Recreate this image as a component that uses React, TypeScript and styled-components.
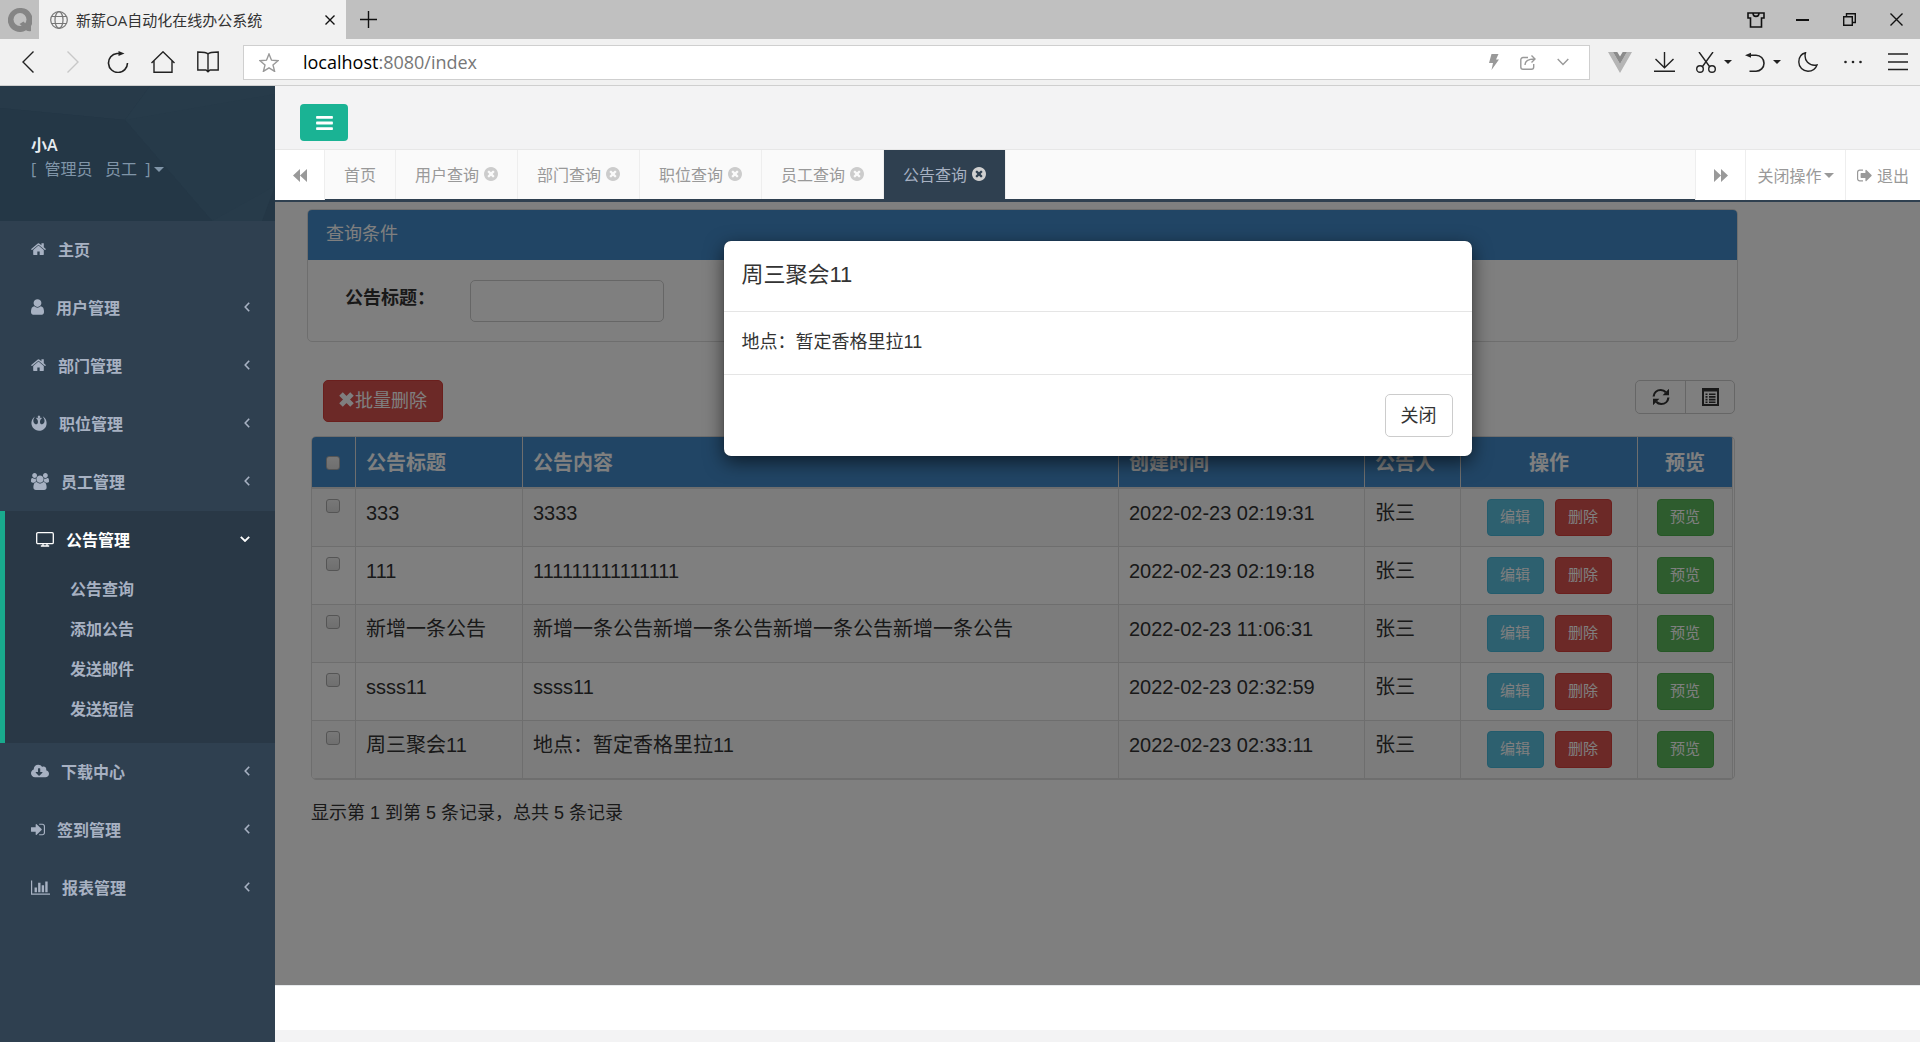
import React from "react";
import styled, { createGlobalStyle, css } from "styled-components";
import { FaRebel, FaCloudDownloadAlt } from "react-icons/fa";

const uiFont = `"Open Sans", "Noto Sans CJK SC", sans-serif`;
const pageFont = `"Liberation Sans", "Noto Sans CJK SC", sans-serif`;

const GlobalStyle = createGlobalStyle`
  *, *::before, *::after { box-sizing: border-box; }
  body { margin: 0; font-family: ${uiFont}; font-size: 16px; background: #f3f3f4; }
  button, input { font-family: inherit; }
  button { margin: 0; padding: 0; border: 0; background: none; color: inherit; cursor: pointer; }
  a { color: inherit; text-decoration: none; }
  svg { display: block; flex: none; }
  ul { list-style: none; margin: 0; padding: 0; }
`;

const Shell = styled.div`
  display: flex;
  flex-direction: column;
  min-height: 100vh;
`;

/* ---------- browser window ---------- */

const TitleBar = styled.header`
  display: flex;
  height: 39px;
  background: #c0c0c0;
  color: #111;
`;
const Center = css`
  display: flex;
  align-items: center;
  justify-content: center;
`;
const BrandMark = styled.div`
  ${Center}
  width: 39px;
`;
const BrowserTab = styled.div`
  display: flex;
  align-items: center;
  gap: 8px;
  width: 307px;
  padding: 0 11px;
  background: #f1f1f1;
  color: #333;
  font-size: 15px;
`;
const TabTitle = styled.span`
  flex: 1;
  white-space: nowrap;
`;
const NewTab = styled.button`
  ${Center}
  width: 44px;
`;
const WindowControls = styled.div`
  display: flex;
  margin-left: auto;
`;
const WindowButton = styled.button`
  ${Center}
  width: 47px;
`;
const ToolBar = styled.div`
  display: flex;
  align-items: center;
  height: 47px;
  padding-left: 5px;
  border-bottom: 1px solid #cfcfcf;
  background: #f1f1f1;
  color: #222;
`;
const ToolButton = styled.button<{ $faded?: boolean }>`
  ${Center}
  gap: 8px;
  min-width: 45px;
  height: 45px;
  color: ${(p) => (p.$faded ? "#c8c8c8" : "inherit")};
`;
const ToolMenu = styled(ToolButton)`
  width: 49px;
  padding-left: 4px;
`;
const AddressBar = styled.div`
  display: flex;
  align-items: center;
  flex: 1;
  height: 35px;
  margin: 0 7px 0 13px;
  padding: 0 20px 0 15px;
  border: 1px solid #cfcfcf;
  background: #fff;
  color: #999;
`;
const Url = styled.div`
  flex: 1;
  padding-left: 24px;
  color: #777;
  font-size: 18px;
  b { color: #000; font-weight: 400; }
`;
const AddressIcons = styled.div`
  display: flex;
  align-items: center;
  gap: 21px;
`;

/* ---------- sidebar ---------- */

const AppBody = styled.div`
  display: flex;
  flex: 1;
`;
const Sidebar = styled.nav`
  width: 275px;
  flex: none;
  background: #2f4050;
  color: #a7b1c2;
`;
const Profile = styled.div`
  position: relative;
  height: 135px;
  padding: 47px 31px 0;
  overflow: hidden;
  background: #243746;
  line-height: 24px;
`;
const ProfilePattern = styled.svg`
  position: absolute;
  inset: 0;
  width: 100%;
  height: 100%;
`;
const UserName = styled.div`
  position: relative;
  color: #e7ebf0;
  font-weight: 600;
`;
const Role = styled.button`
  position: relative;
  display: flex;
  align-items: center;
  gap: 3px;
  color: #8095a8;
  font-size: 16px;
  line-height: 24px;
  white-space: pre;
`;
const Caret = styled.i`
  border: 5px solid transparent;
  border-top-color: currentColor;
  border-bottom: 0;
`;
const SmallCaret = styled(Caret)`
  border-width: 4px;
  border-bottom: 0;
`;
const MenuItem = styled.li<{ $active?: boolean }>`
  ${(p) =>
    p.$active &&
    css`
      border-left: 5px solid #19aa8d;
      background: #293846;
    `}
`;
const MenuLink = styled.a<{ $active?: boolean }>`
  display: flex;
  align-items: center;
  gap: 12px;
  height: 58px;
  padding: 0 25px 2px 31px;
  font-weight: 600;
  color: ${(p) => (p.$active ? "#fff" : "#a7b1c2")};
`;
const MenuText = styled.span`
  flex: 1;
`;
const SubMenu = styled.ul`
  padding-bottom: 14px;
`;
const SubLink = styled.a`
  display: block;
  padding-left: 65px;
  line-height: 40px;
  font-weight: 600;
`;

/* ---------- main column ---------- */

const Main = styled.main`
  display: flex;
  flex: 1;
  flex-direction: column;
  min-width: 0;
  background: #f3f3f4;
`;
const TopRow = styled.div`
  padding: 18px 25px 8px;
`;
const Toggle = styled.button`
  ${Center}
  width: 48px;
  height: 37px;
  border-radius: 4px;
  background: #1ab394;
  color: #fff;
`;
const TabBar = styled.div`
  display: flex;
  height: 53px;
  border-top: 1px solid #e7e7e7;
  border-bottom: 2px solid #2f4050;
  background: #fff;
  color: #999;
`;
const RollButton = styled.button<{ $width: number; $side: "left" | "right" }>`
  ${Center}
  gap: 2px;
  width: ${(p) => p.$width}px;
  border-${(p) => (p.$side === "left" ? "right" : "left")}: 1px solid #eee;
  font-size: 16px;
`;
const ExitButton = styled(RollButton)`
  gap: 5px;
`;
const Tabs = styled.div`
  display: flex;
  flex: 1;
  border-bottom: 1px solid #2f4050;
  background: #fafafa;
`;
const Tab = styled.a<{ $active?: boolean }>`
  display: flex;
  align-items: center;
  gap: 5px;
  padding: 0 19px 1px;
  border-right: 1px solid #eee;
  background: ${(p) => (p.$active ? "#2f4050" : "transparent")};
  color: ${(p) => (p.$active ? "#a7b1c2" : "#999")};
  white-space: nowrap;
`;
const TabClose = styled.span<{ $active?: boolean }>`
  color: ${(p) => (p.$active ? "#d0d0d0" : "#ccc")};
`;
const Footer = styled.footer`
  height: 45px;
  margin-bottom: 12px;
  border-top: 1px solid #e7eaec;
  background: #fff;
`;

/* ---------- notice page ---------- */

const Frame = styled.section`
  position: relative;
  flex: 1;
  padding: 7px 32px;
  background: #fff;
  color: #333;
  font-family: ${pageFont};
  font-size: 18px;
  line-height: 26px;
`;
const Container = styled.div`
  max-width: 1431px;
`;
const Panel = styled.form`
  border: 1px solid #ddd;
  border-radius: 5px;
`;
const PanelHeading = styled.div`
  padding: 11px 18px 13px;
  border-radius: 4px 4px 0 0;
  background: #428bca;
  color: #fff;
`;
const PanelBody = styled.div`
  display: flex;
  align-items: flex-start;
  padding: 20px 37px 19px;
`;
const FieldLabel = styled.label`
  width: 125px;
  padding-top: 5px;
  font-weight: 700;
`;
const TextField = styled.input`
  width: 194px;
  height: 42px;
  padding: 8px 15px;
  border: 1px solid #ccc;
  border-radius: 5px;
  background: #fff;
  font-size: 18px;
`;
const Actions = styled.div`
  display: flex;
  align-items: flex-start;
  justify-content: space-between;
  padding: 38px 3px 14px 16px;
`;
const BatchDelete = styled.button`
  ${Center}
  gap: 1px;
  height: 42px;
  padding: 0 15px 4px;
  border: 1px solid #d43f3a;
  border-radius: 5px;
  background: #d9534f;
  color: #fff;
  font-size: 18px;
`;
const ButtonGroup = styled.div`
  display: flex;
  overflow: hidden;
  border: 1px solid #ccc;
  border-radius: 5px;
`;
const GroupButton = styled.button`
  ${Center}
  width: 49px;
  height: 32px;
  color: #333;
  & + & { border-left: 1px solid #ccc; }
`;
const TableBox = styled.div`
  margin: 0 3px 0 4px;
  padding-right: 1px;
  overflow: hidden;
  border: 1px solid #ddd;
  border-radius: 5px;
`;
const Table = styled.table`
  width: 100%;
  table-layout: fixed;
  border-collapse: separate;
  border-spacing: 0;
  font-size: 20px;
  line-height: 28px;
`;
const Col = styled.col<{ $width?: number }>`
  width: ${(p) => (p.$width ? `${p.$width}px` : "auto")};
`;
const HeadCell = styled.th<{ $align?: string }>`
  height: 52px;
  padding: 2px 10px 0;
  border-right: 1px solid #ddd;
  border-bottom: 2px solid #ddd;
  background: #428bca;
  color: #fff;
  text-align: ${(p) => p.$align || "left"};
  vertical-align: middle;
`;
const BodyRow = styled.tr`
  &:nth-child(odd) { background: #f9f9f9; }
`;
const Cell = styled.td`
  height: 58px;
  padding: 10px;
  border-right: 1px solid #ddd;
  border-bottom: 1px solid #ddd;
  vertical-align: top;
`;
const Tick = styled.input`
  display: block;
  appearance: none;
  width: 14px;
  height: 14px;
  margin: 0 4px;
  border: 1px solid #aaa;
  border-radius: 3px;
  background: linear-gradient(#f0f0f0, #dedede);
`;
const CellActions = styled.div`
  display: flex;
  justify-content: center;
  gap: 11px;
`;
const tones = {
  info: ["#5bc0de", "#46b8da"],
  danger: ["#d9534f", "#d43f3a"],
  success: ["#5cb85c", "#4cae4c"],
};
const SmallButton = styled.button<{ $tone: keyof typeof tones }>`
  width: 57px;
  height: 37px;
  padding-bottom: 4px;
  border: 1px solid ${(p) => tones[p.$tone][1]};
  border-radius: 4px;
  background: ${(p) => tones[p.$tone][0]};
  color: #fff;
  font-size: 15px;
`;
const Summary = styled.p`
  margin: 0;
  padding: 20px 4px;
`;

/* ---------- modal ---------- */

const Backdrop = styled.div`
  position: absolute;
  inset: 0;
  display: flex;
  align-items: flex-start;
  justify-content: center;
  padding-top: 39px;
  background: rgba(0, 0, 0, 0.5);
`;
const Dialog = styled.div`
  width: 748px;
  max-width: 100%;
  border-radius: 7px;
  background: #fff;
  box-shadow: 0 6px 19px rgba(0, 0, 0, 0.6), 0 0 1px rgba(0, 0, 0, 0.6);
`;
const DialogTitle = styled.h4`
  margin: 0;
  padding: 18px 18px 20px;
  border-bottom: 1px solid #e5e5e5;
  font-size: 22px;
  font-weight: 400;
  line-height: 32px;
`;
const DialogBody = styled.div`
  padding: 17px 18px 19px;
`;
const DialogFooter = styled.div`
  display: flex;
  justify-content: flex-end;
  padding: 19px;
  border-top: 1px solid #e5e5e5;
`;
const CloseButton = styled.button`
  width: 68px;
  height: 43px;
  padding-bottom: 4px;
  border: 1px solid #ccc;
  border-radius: 5px;
  background: #fff;
  color: #333;
  font-size: 18px;
`;

/* ---------- icons ---------- */

type StrokeProps = { w: number; h: number; sw?: number; children: React.ReactNode };
const Line = ({ w, h, sw = 1.4, children }: StrokeProps) => (
  <svg width={w} height={h} viewBox={`0 0 ${w} ${h}`} fill="none" stroke="currentColor" strokeWidth={sw}>
    {children}
  </svg>
);
const Solid = ({ w, h, box, d }: { w: number; h: number; box: string; d: string }) => (
  <svg width={w} height={h} viewBox={box} fill="currentColor">
    <path d={d} />
  </svg>
);

const HomeIcon = () => (
  <Solid w={15} h={14} box="80 220 1632 1340" d="M1472 992v480q0 26-19 45t-45 19h-384v-384h-256v384h-384q-26 0-45-19t-19-45v-480q0-1 .5-3t.5-3l575-474 575 474q1 2 1 6zm223-69l-62 74q-8 9-21 11h-3q-13 0-21-7l-692-577-692 577q-12 8-24 7-13-2-21-11l-62-74q-8-10-7-23.5t11-21.5l719-599q32-26 76-26t76 26l244 204v-195q0-14 9-23t23-9h192q14 0 23 9t9 23v408l219 182q10 8 11 21.5t-7 23.5z" />
);
const UserIcon = () => (
  <Solid w={13} h={16} box="256 128 1280 1536" d="M1536 1399q0 109-62.5 187t-150.5 78h-854q-88 0-150.5-78t-62.5-187q0-85 8.5-160.5t31.5-152 58.5-131 94-89 134.5-34.5q131 128 313 128t313-128q76 0 134.5 34.5t94 89 58.5 131 31.5 152 8.5 160.5zm-256-887q0 159-112.5 271.5t-271.5 112.5-271.5-112.5-112.5-271.5 112.5-271.5 271.5-112.5 271.5 112.5 112.5 271.5z" />
);
const UsersIcon = () => (
  <Solid w={18} h={17} box="0 0 1920 1792" d="M593 896q-162 5-265 128h-134q-82 0-138-40.5t-56-118.5q0-353 124-353 6 0 43.5 21t97.5 42.5 119 21.5q67 0 133-23-5 37-5 66 0 139 81 256zm1071 637q0 120-73 189.5t-194 69.500h-874q-121 0-194-69.500t-73-189.500q0-53 3.500-103.500t14-109 26.500-108.500 43-97.500 62-81 85.500-53.500 111.500-20q10 0 43 21.500t73 48 107 48 135 21.500 135-21.500 107-48 73-48 43-21.500q61 0 111.500 20t85.500 53.500 62 81 43 97.500 26.500 108.500 14 109 3.500 103.500zm-1024-1277q0 106-75 181t-181 75-181-75-75-181 75-181 181-75 181 75 75 181zm704 384q0 159-112.500 271.500t-271.500 112.500-271.500-112.500-112.500-271.500 112.500-271.500 271.500-112.500 271.500 112.500 112.500 271.500zm576 225q0 78-56 118.500t-138 40.500h-134q-103-123-265-128 81-117 81-256 0-29-5-66 66 23 133 23 59 0 119-21.500t97.500-42.500 43.500-21q124 0 124 353zm-128-609q0 106-75 181t-181 75-181-75-75-181 75-181 181-75 181 75 75 181z" />
);
const SignInIcon = () => (
  <Solid w={14} h={13} box="128 256 1536 1280" d="M1312 896q0 26-19 45l-544 544q-19 19-45 19t-45-19-19-45v-288h-448q-26 0-45-19t-19-45v-384q0-26 19-45t45-19h448v-288q0-26 19-45t45-19 45 19l544 544q19 19 19 45zm352-352v704q0 119-84.5 203.5t-203.5 84.5h-320q-13 0-22.5-9.5t-9.5-22.5q0-4-1-20t-.5-26.5 3-23.5 10-19.5 20.5-6.5h320q66 0 113-47t47-113v-704q0-66-47-113t-113-47h-312l-11.5-1-11.5-3-8-5.5-7-9-2-13.5q0-4-1-20t-.5-26.5 3-23.5 10-19.5 20.5-6.5h320q119 0 203.5 84.5t84.5 203.5z" />
);
const SignOutIcon = () => (
  <Solid w={15} h={13} box="64 256 1600 1280" d="M704 1440q0 4 1 20t.5 26.5-3 23.5-10 19.5-20.5 6.5h-320q-119 0-203.5-84.5t-84.5-203.5v-704q0-119 84.5-203.5t203.5-84.5h320q13 0 22.5 9.5t9.5 22.5q0 4 1 20t.5 26.5-3 23.5-10 19.5-20.5 6.5h-320q-66 0-113 47t-47 113v704q0 66 47 113t113 47h312l11.5 1 11.5 3 8 5.5 7 9 2 13.5zm928-544q0 26-19 45l-544 544q-19 19-45 19t-45-19-19-45v-288h-448q-26 0-45-19t-19-45v-384q0-26 19-45t45-19h448v-288q0-26 19-45t45-19 45 19l544 544q19 19 19 45z" />
);
const ChartIcon = () => (
  <Solid w={19} h={15} box="0 128 2048 1536" d="M640 896v512h-256v-512h256zm384-512v1024h-256v-1024h256zm1024 1152v128h-2048v-1536h128v1408h1920zm-640-896v768h-256v-768h256zm384-384v1152h-256v-1152h256z" />
);
const BarsIcon = () => (
  <Solid w={17} h={14} box="128 256 1536 1280" d="M1664 1344v128q0 26-19 45t-45 19h-1408q-26 0-45-19t-19-45v-128q0-26 19-45t45-19h1408q26 0 45 19t19 45zm0-512v128q0 26-19 45t-45 19h-1408q-26 0-45-19t-19-45v-128q0-26 19-45t45-19h1408q26 0 45 19t19 45zm0-512v128q0 26-19 45t-45 19h-1408q-26 0-45-19t-19-45v-128q0-26 19-45t45-19h1408q26 0 45 19t19 45z" />
);
const TimesCircle = () => (
  <Solid w={14} h={14} box="128 128 1536 1536" d="M1277 1122q0-26-19-45l-181-181 181-181q19-19 19-45 0-27-19-46l-90-90q-19-19-46-19-26 0-45 19l-181 181-181-181q-19-19-45-19-27 0-46 19l-90 90q-19 19-19 46 0 26 19 45l181 181-181 181q-19 19-19 45 0 27 19 46l90 90q19 19 46 19 26 0 45-19l181-181 181 181q19 19 45 19 27 0 46-19l90-90q19-19 19-46zm387-226q0 209-103 385.5t-279.5 279.5-385.5 103-385.5-103-279.5-279.5-103-385.5 103-385.5 279.5-279.5 385.5-103 385.5 103 279.5 279.5 103 385.5z" />
);
const DesktopIcon = () => (
  <Line w={18} h={15} sw={1.3}>
    <rect x="0.7" y="0.7" width="16.6" height="11" rx="1.2" />
    <path d="M7 12v1.6M11 12v1.6M4.8 14h8.4" />
  </Line>
);
const AngleLeft = () => (
  <Line w={6} h={10} sw={1.6}><path d="M5.2 0.8 1.2 5l4 4.2" /></Line>
);
const AngleDown = () => (
  <Line w={10} h={6} sw={1.8}><path d="M.8 .8 5 5l4.200-4.200" /></Line>
);
const Backward = () => <Solid w={14} h={13} box="0 0 14 13" d="M7 0v13L0 6.500zM14 0v13L7 6.500z" />;
const Forward = () => <Solid w={14} h={13} box="0 0 14 13" d="M0 0v13L7 6.500zM7 0v13l7-6.500z" />;
const RemoveIcon = () => (
  <Line w={15} h={15} sw={5}><path d="M2 2l11 11M13 2 2 13" /></Line>
);
const RefreshIcon = () => (
  <svg width="18" height="18" viewBox="0 0 18 18" fill="none" stroke="currentColor" strokeWidth="2.2">
    <path d="M1.600 8.500C2 4.500 5 2 8.800 2c2 0 3.800.8 5 2.200M16.400 9.500C16 13.500 13 16 9.200 16c-2 0-3.800-.8-5-2.200" />
    <path d="M17 .8v6.400h-6.400zM1 17.200v-6.400h6.400z" fill="currentColor" stroke="none" />
  </svg>
);
const ListIcon = () => (
  <svg width="17" height="18" viewBox="0 0 17 18" fill="none" stroke="currentColor">
    <path d="M1 1h15v16H1z" strokeWidth="2" />
    <path d="M.5 1.800h16" strokeWidth="3.600" />
    <path d="M3.500 6.200h2M3.500 8.900h2M3.500 11.600h2M3.500 14.300h2M7 6.200h6.500M7 8.900h6.500M7 11.600h6.500M7 14.300h6.500" strokeWidth="1.600" />
  </svg>
);

/* ---------- data ---------- */

const menuBefore = [
  { text: "主页", icon: <HomeIcon />, leaf: true },
  { text: "用户管理", icon: <UserIcon /> },
  { text: "部门管理", icon: <HomeIcon /> },
  { text: "职位管理", icon: <FaRebel size={16} /> },
  { text: "员工管理", icon: <UsersIcon /> },
];
const subMenu = ["公告查询", "添加公告", "发送邮件", "发送短信"];
const menuAfter = [
  { text: "下载中心", icon: <FaCloudDownloadAlt size={18} /> },
  { text: "签到管理", icon: <SignInIcon /> },
  { text: "报表管理", icon: <ChartIcon /> },
];
const tabs = ["首页", "用户查询", "部门查询", "职位查询", "员工查询", "公告查询"];
const notices = [
  ["333", "3333", "2022-02-23 02:19:31"],
  ["111", "111111111111111", "2022-02-23 02:19:18"],
  ["新增一条公告", "新增一条公告新增一条公告新增一条公告新增一条公告", "2022-02-23 11:06:31"],
  ["ssss11", "ssss11", "2022-02-23 02:32:59"],
  ["周三聚会11", "地点：暂定香格里拉11", "2022-02-23 02:33:11"],
];

type EntryProps = { text: string; icon: React.ReactNode; leaf?: boolean };
const Entry = ({ text, icon, leaf }: EntryProps) => (
  <MenuItem>
    <MenuLink href="#">
      {icon}
      <MenuText>{text}</MenuText>
      {!leaf && <AngleLeft />}
    </MenuLink>
  </MenuItem>
);

const BrowserChrome = () => (
  <>
    <TitleBar>
      <BrandMark>
        <svg width="24" height="24" viewBox="0 0 24 24">
          <path d="M12 0a12 12 0 1 0 6 22.300c1.500.9 3.500 1.200 5 .7v-5A12 12 0 0 0 12 0z" fill="#858585" />
          <circle cx="12" cy="11.500" r="6.500" fill="#c0c0c0" />
          <path d="M11.500 16l4-2.500 4.500 5-3 2z" fill="#858585" />
        </svg>
      </BrandMark>
      <BrowserTab>
        <Line w={18} h={18} sw={1.2}>
          <g stroke="#777">
            <circle cx="9" cy="9" r="8.300" />
            <ellipse cx="9" cy="9" rx="4" ry="8.300" />
            <path d="M1.500 5.500h15M1.500 12.500h15" />
          </g>
        </Line>
        <TabTitle>新薪OA自动化在线办公系统</TabTitle>
        <button aria-label="关闭标签页">
          <Line w={10} h={10}><path d="M.5 .5l9 9M9.500 .5l-9 9" stroke="#111" /></Line>
        </button>
      </BrowserTab>
      <NewTab aria-label="新标签页">
        <Line w={17} h={17}><path d="M8.500 0v17M0 8.500h17" /></Line>
      </NewTab>
      <WindowControls>
        <WindowButton aria-label="皮肤">
          <Line w={18} h={16} sw={1.6}><path d="M1 1h16v5h-2.500v9h-11V6H1zM6 1c0 4.500 6 4.500 6 0" /></Line>
        </WindowButton>
        <WindowButton aria-label="最小化"><Line w={13} h={2} sw={2}><path d="M0 1h13" /></Line></WindowButton>
        <WindowButton aria-label="还原">
          <Line w={13} h={13}><path d="M.7 3.700h8.600v8.600H.7zM3.500 3.500V.7h8.800v8.800H9.500" /></Line>
        </WindowButton>
        <WindowButton aria-label="关闭"><Line w={13} h={13}><path d="M.5 .5l12 12M12.500 .5l-12 12" /></Line></WindowButton>
      </WindowControls>
    </TitleBar>
    <ToolBar>
      <ToolButton aria-label="后退"><Line w={12} h={22}><path d="M11.500 .5 1 11l10.500 10.500" /></Line></ToolButton>
      <ToolButton $faded aria-label="前进"><Line w={12} h={22}><path d="M.5 .5 11 11 .5 21.500" /></Line></ToolButton>
      <ToolButton aria-label="刷新">
        <Line w={22} h={22} sw={1.6}>
          <path d="M14 2.500H10A9.500 9.500 0 1 0 20.500 12" />
          <path d="M11.500 0l6 2.500-6 2.500z" fill="currentColor" stroke="none" />
        </Line>
      </ToolButton>
      <ToolButton aria-label="主页"><Line w={24} h={22}><path d="M.5 12 12 .8 23.500 12M3 10v11.300h18V10" /></Line></ToolButton>
      <ToolButton aria-label="收藏夹">
        <Line w={22} h={22}><path d="M11 3C9.500 1 6 1 .8 1v18H9l2 1.800 2-1.800h8.200V1C16 1 12.500 1 11 3zv17" /></Line>
      </ToolButton>
      <AddressBar>
        <Line w={20} h={19}><path d="M10 1l2.500 6.200 6.500.5-5 4.300 1.600 6.400L10 14.900l-5.600 3.500L6 12 1 7.700l6.500-.5z" /></Line>
        <Url><b>localhost</b>:8080/index</Url>
        <AddressIcons>
          <Solid w={10} h={16} box="0 0 10 16" d="M2.500 0h7L7 5.500h3L2.500 16 4 9H0z" />
          <Line w={16} h={15}>
            <path d="M8 2.500H3A2.200 2.200 0 0 0 .8 4.700v7.300A2.200 2.200 0 0 0 3 14.200h8.500a2.200 2.200 0 0 0 2.200-2.200V9M5 10c0-4 3-6 9.500-6M11.500 .5 15 4l-3.500 3.500" />
          </Line>
          <Line w={12} h={8}><path d="M.7 1 6 6.500 11.300 1" /></Line>
        </AddressIcons>
      </AddressBar>
      <ToolButton aria-label="Vue">
        <svg width="24" height="21" viewBox="0 0 24 21">
          <path d="M0 0h5l7 12 7-12h5L12 21z" fill="#b5b5b5" />
          <path d="M5 0h4.300L12 4.500 14.700 0H19l-7 12z" fill="#8b8b8b" />
        </svg>
      </ToolButton>
      <ToolButton aria-label="下载"><Line w={21} h={20}><path d="M10.500 0v15.500M1.500 7l9 8.800 9-8.800M0 19.200h21" /></Line></ToolButton>
      <ToolMenu aria-label="截图">
        <Line w={20} h={21}>
          <path d="M3 0l10.500 14.500M17 0 6.500 14.500" /><circle cx="4" cy="17" r="3.300" /><circle cx="16" cy="17" r="3.300" />
        </Line>
        <SmallCaret />
      </ToolMenu>
      <ToolMenu aria-label="恢复">
        <Line w={20} h={20} sw={1.6}>
          <path d="M4 3.200h7a8 8 0 0 1 0 16H4.500" />
          <path d="M6 .7v5L0 3.200z" fill="currentColor" stroke="none" />
        </Line>
        <SmallCaret />
      </ToolMenu>
      <ToolButton aria-label="夜间模式">
        <Line w={20} h={20}><path d="M7.500 .8C3 2 .8 6 .8 10a9.200 9.200 0 0 0 9.200 9.200c4 0 7.500-2 9-6.200C11 14.500 5.500 8.500 7.500 .8z" /></Line>
      </ToolButton>
      <ToolButton aria-label="更多">
        <svg width="18" height="4" viewBox="0 0 18 4" fill="#222"><circle cx="1.500" cy="2" r="1.300" /><circle cx="9" cy="2" r="1.300" /><circle cx="16.500" cy="2" r="1.300" /></svg>
      </ToolButton>
      <ToolButton aria-label="菜单"><Line w={20} h={18} sw={1.5}><path d="M0 1h20M0 9h20M0 16.500h20" /></Line></ToolButton>
    </ToolBar>
  </>
);

const App = () => (
  <Shell>
    <GlobalStyle />
    <BrowserChrome />
    <AppBody>
      <Sidebar>
        <Profile>
          <ProfilePattern viewBox="0 0 275 135" preserveAspectRatio="none">
            <path d="M0 0h150l-25 34L0 22z" fill="#273a49" />
            <path d="M150 0h125v100l-13 35h-50L125 34z" fill="#273b4a" />
            <path d="M125 34 275 8v92l-63 35z" fill="#263a49" />
            <path d="M0 22l125 12 87 101H0z" fill="#243746" />
          </ProfilePattern>
          <UserName>小A</UserName>
          <Role>{"[  管理员   员工  ]"}<Caret /></Role>
        </Profile>
        <ul>
          {menuBefore.map((m) => <Entry key={m.text} {...m} />)}
          <MenuItem $active>
            <MenuLink href="#" $active>
              <DesktopIcon />
              <MenuText>公告管理</MenuText>
              <AngleDown />
            </MenuLink>
            <SubMenu>
              {subMenu.map((s) => <li key={s}><SubLink href="#">{s}</SubLink></li>)}
            </SubMenu>
          </MenuItem>
          {menuAfter.map((m) => <Entry key={m.text} {...m} />)}
        </ul>
      </Sidebar>

      <Main>
        <TopRow><Toggle aria-label="收起菜单"><BarsIcon /></Toggle></TopRow>
        <TabBar>
          <RollButton $width={50} $side="left" aria-label="向左"><Backward /></RollButton>
          <Tabs>
            {tabs.map((t, i) => {
              const active = i === tabs.length - 1;
              return (
                <Tab key={t} href="#" $active={active}>
                  {t}
                  {i > 0 && <TabClose $active={active}><TimesCircle /></TabClose>}
                </Tab>
              );
            })}
          </Tabs>
          <RollButton $width={50} $side="right" aria-label="向右"><Forward /></RollButton>
          <RollButton $width={100} $side="right">关闭操作<Caret /></RollButton>
          <ExitButton $width={75} $side="right"><SignOutIcon />退出</ExitButton>
        </TabBar>

        <Frame>
          <Container>
            <Panel>
              <PanelHeading>查询条件</PanelHeading>
              <PanelBody>
                <FieldLabel htmlFor="notice-title">公告标题：</FieldLabel>
                <TextField id="notice-title" type="text" />
              </PanelBody>
            </Panel>
            <Actions>
              <BatchDelete><RemoveIcon />批量删除</BatchDelete>
              <ButtonGroup>
                <GroupButton aria-label="刷新"><RefreshIcon /></GroupButton>
                <GroupButton aria-label="切换视图"><ListIcon /></GroupButton>
              </ButtonGroup>
            </Actions>
            <TableBox>
              <Table>
                <colgroup>
                  <Col $width={44} /><Col $width={167} /><Col /><Col $width={246} />
                  <Col $width={96} /><Col $width={177} /><Col $width={95} />
                </colgroup>
                <thead>
                  <tr>
                    <HeadCell><Tick type="checkbox" aria-label="全选" /></HeadCell>
                    <HeadCell>公告标题</HeadCell>
                    <HeadCell>公告内容</HeadCell>
                    <HeadCell>创建时间</HeadCell>
                    <HeadCell>公告人</HeadCell>
                    <HeadCell $align="center">操作</HeadCell>
                    <HeadCell $align="center">预览</HeadCell>
                  </tr>
                </thead>
                <tbody>
                  {notices.map(([title, content, time]) => (
                    <BodyRow key={time}>
                      <Cell><Tick type="checkbox" aria-label={title} /></Cell>
                      <Cell>{title}</Cell>
                      <Cell>{content}</Cell>
                      <Cell>{time}</Cell>
                      <Cell>张三</Cell>
                      <Cell>
                        <CellActions>
                          <SmallButton $tone="info">编辑</SmallButton>
                          <SmallButton $tone="danger">删除</SmallButton>
                        </CellActions>
                      </Cell>
                      <Cell>
                        <CellActions><SmallButton $tone="success">预览</SmallButton></CellActions>
                      </Cell>
                    </BodyRow>
                  ))}
                </tbody>
              </Table>
            </TableBox>
            <Summary>显示第 1 到第 5 条记录，总共 5 条记录</Summary>
          </Container>

          <Backdrop>
            <Dialog role="dialog" aria-modal="true" aria-labelledby="dialog-title">
              <DialogTitle id="dialog-title">周三聚会11</DialogTitle>
              <DialogBody>地点：暂定香格里拉11</DialogBody>
              <DialogFooter><CloseButton>关闭</CloseButton></DialogFooter>
            </Dialog>
          </Backdrop>
        </Frame>
        <Footer />
      </Main>
    </AppBody>
  </Shell>
);

export default App;
